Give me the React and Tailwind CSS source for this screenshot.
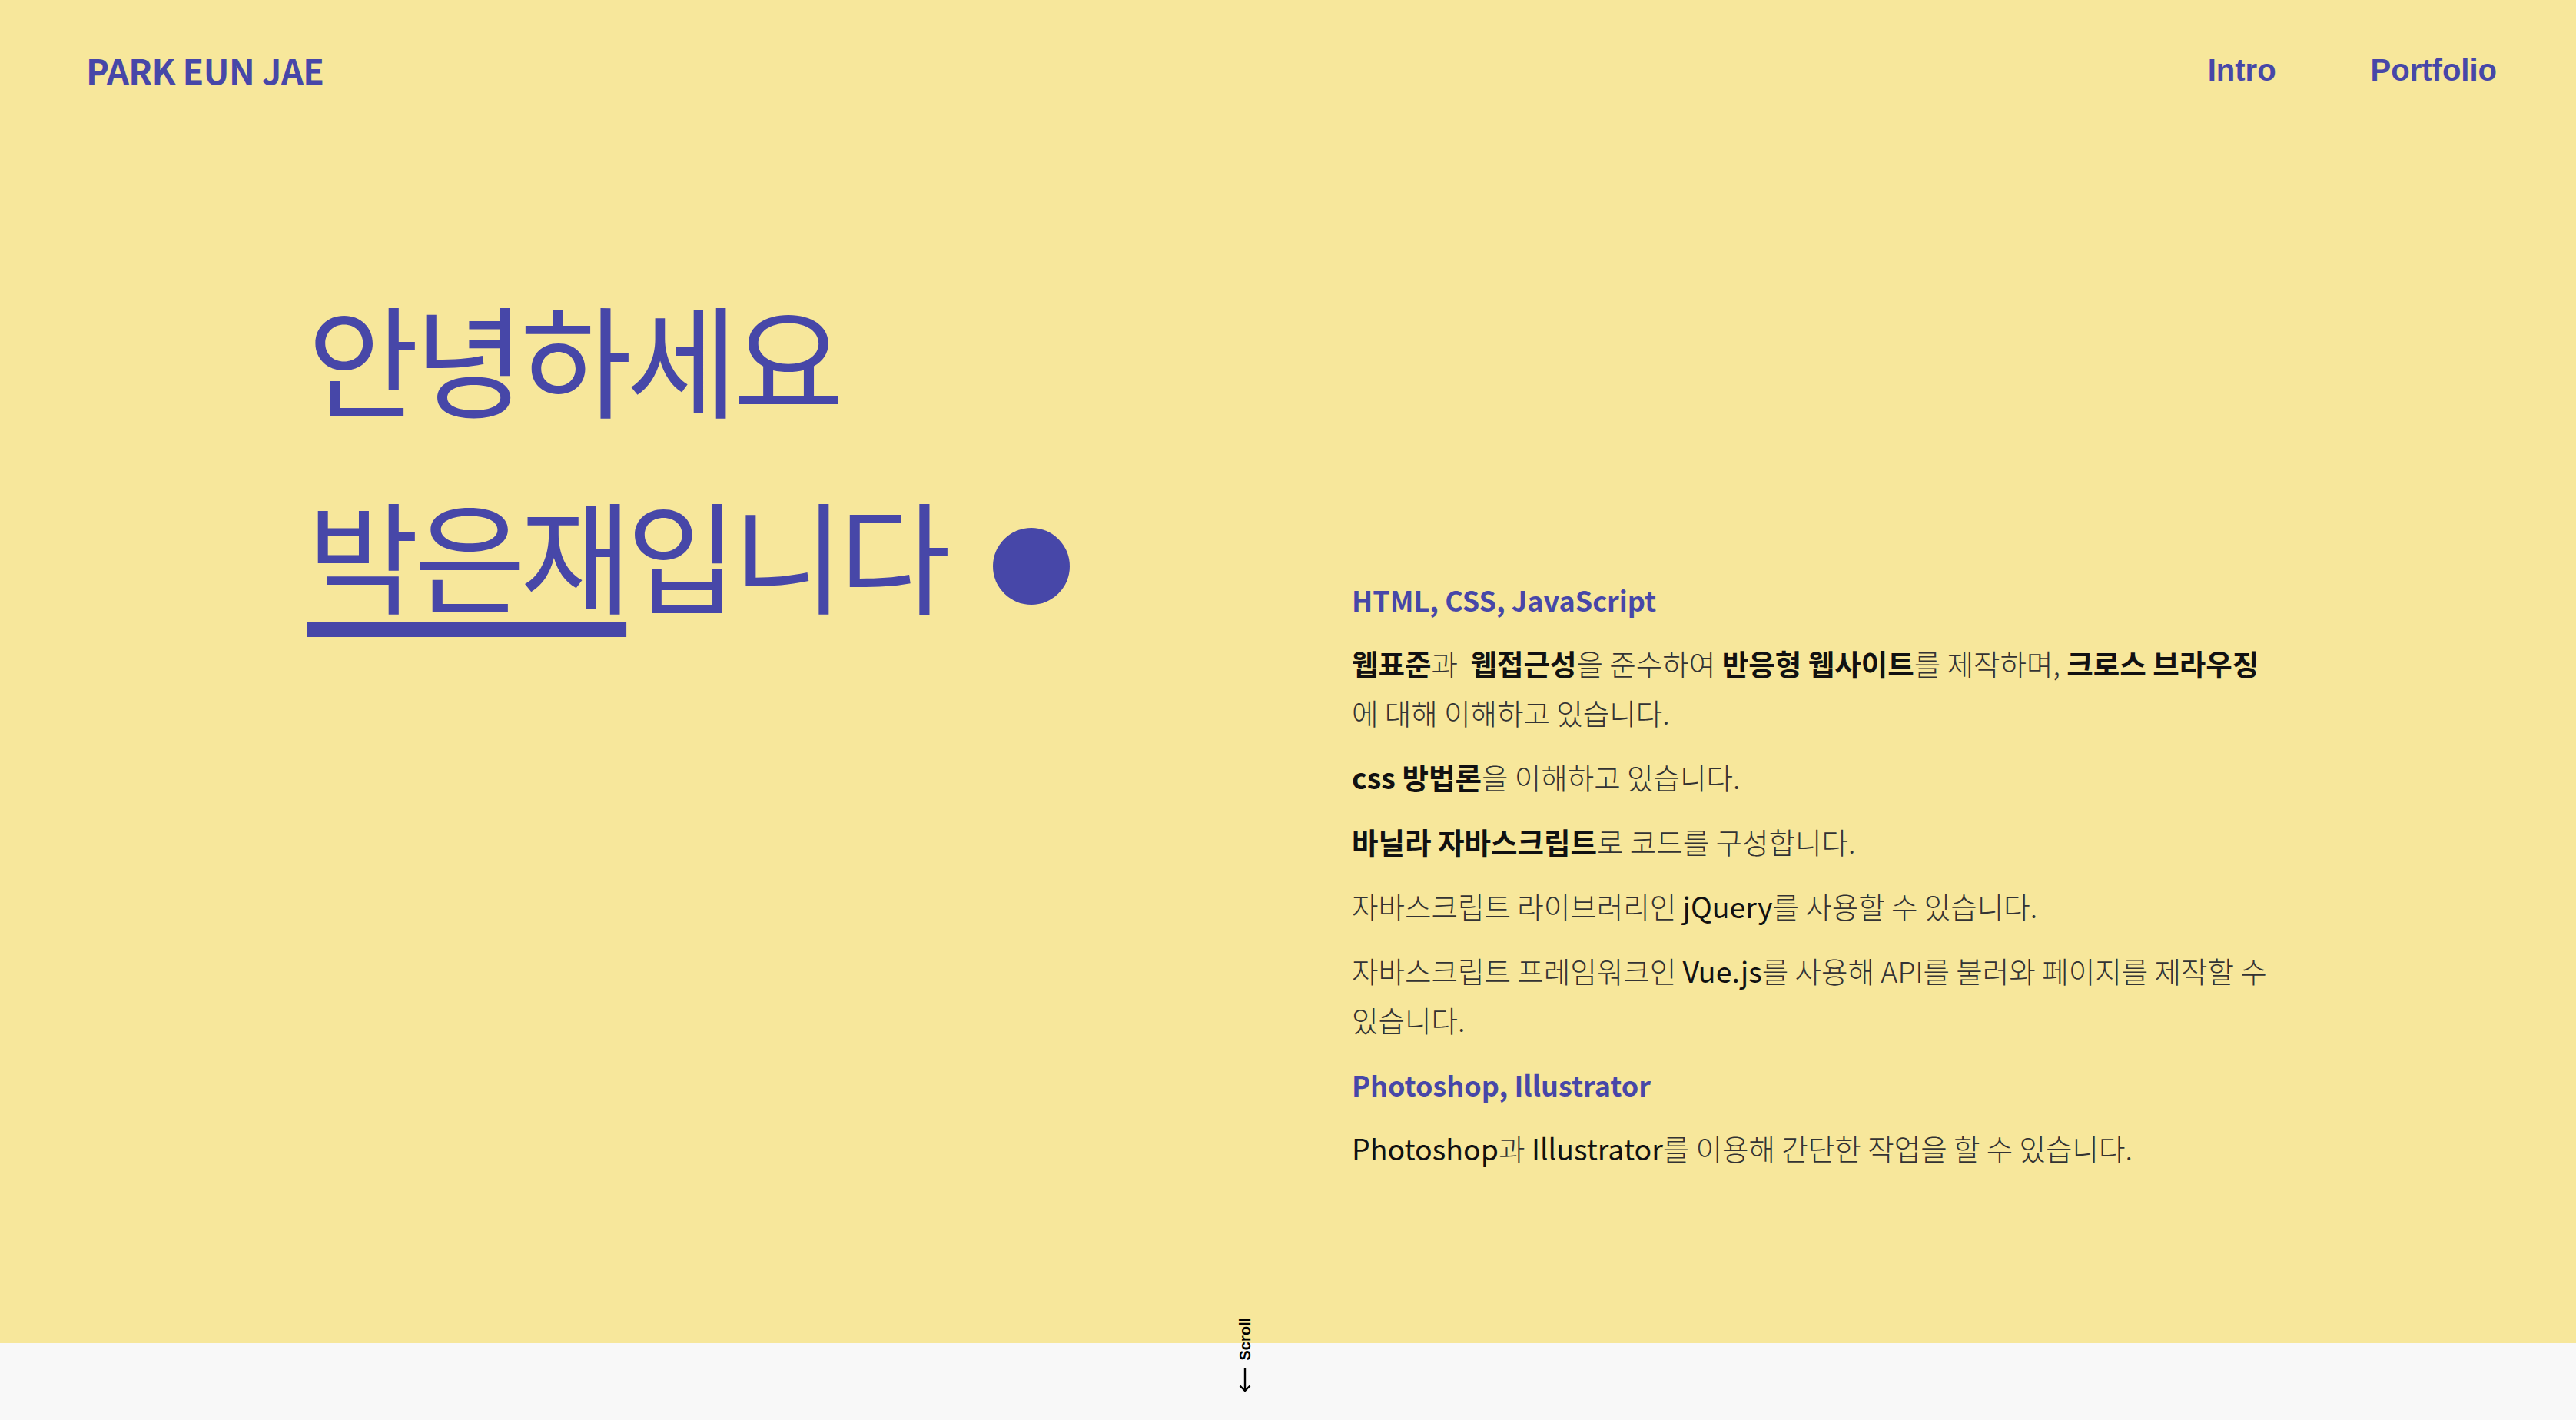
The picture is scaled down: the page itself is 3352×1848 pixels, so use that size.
const kr = { fontFamily: '"Noto Sans CJK KR", "Noto Sans", sans-serif' }
const en = { fontFamily: '"Liberation Sans", Arial, sans-serif' }

// bold keyword (hangul)
function Strong({ children }) {
  return <span className="font-bold text-[#111]">{children}</span>
}

// tool / library names are only darker, not heavier
function Tech({ children }) {
  return <span className="font-normal text-[#111]">{children}</span>
}

function Skill({ title, children, first }) {
  return (
    <div className={first ? '' : 'mt-[3px]'}>
      <h3 className="mb-[19px] text-[36px] font-bold leading-[64px] text-[#4747a8]">{title}</h3>
      {children}
    </div>
  )
}

function Line({ children }) {
  return <p className="mb-[20px] text-[37.5px] font-light leading-[64px] text-[#333]">{children}</p>
}

export default function App() {
  return (
    <div className="min-h-screen bg-[#f8f8f8]" style={kr}>
      <section className="relative h-[1748px] bg-[#f7e79b]">
        {/* header */}
        <header className="flex h-[182px] items-center justify-between pl-[112px] pr-[103px]">
          <h1 className="text-[45px] font-bold tracking-[-0.5px] text-[#4747a8]">PARK EUN JAE</h1>
          <nav className="flex gap-[123px] text-[40px] font-bold text-[#4747a8]" style={en}>
            <a href="#intro">Intro</a>
            <a href="#portfolio">Portfolio</a>
          </nav>
        </header>

        {/* intro */}
        <div className="flex pl-[400px]">
          <div className="w-[1359px] pt-[154px]">
            <h2 className="text-[158px] font-normal leading-[255px] tracking-[-7px] text-[#4747a8]">
              <span className="block">안녕하세요</span>
              <span className="flex items-center">
                <span>
                  <span className="underline decoration-[20px] underline-offset-[22px] [text-decoration-skip-ink:none]">박은재</span>
                  입니다
                </span>
                <span className="ml-[62px] mt-[36px] h-[100px] w-[100px] shrink-0 rounded-full bg-[#4747a8]" />
              </span>
            </h2>
          </div>

          <div className="w-[1200px] pt-[566px]">
            <Skill title="HTML, CSS, JavaScript" first>
              <Line>
                <Strong>웹표준</Strong>과 &nbsp;<Strong>웹접근성</Strong>을 준수하여 <Strong>반응형 웹사이트</Strong>를 제작하며,{' '}
                <Strong>크로스 브라우징</Strong>에 대해 이해하고 있습니다.
              </Line>
              <Line>
                <Strong>css 방법론</Strong>을 이해하고 있습니다.
              </Line>
              <Line>
                <Strong>바닐라 자바스크립트</Strong>로 코드를 구성합니다.
              </Line>
              <Line>
                자바스크립트 라이브러리인 <Tech>jQuery</Tech>를 사용할 수 있습니다.
              </Line>
              <Line>
                자바스크립트 프레임워크인 <Tech>Vue.js</Tech>를 사용해 API를 불러와 페이지를 제작할 수 있습니다.
              </Line>
            </Skill>
            <Skill title="Photoshop, Illustrator">
              <Line>
                <Tech>Photoshop</Tech>과 <Tech>Illustrator</Tech>를 이용해 간단한 작업을 할 수 있습니다.
              </Line>
            </Skill>
          </div>
        </div>

        {/* scroll hint */}
        <div className="absolute left-[1606px] top-[1715px] flex w-[28px] flex-col items-center gap-[9px] text-black">
          <span className="rotate-180 text-[20px] font-bold leading-[20px] [writing-mode:vertical-rl]" style={en}>
            Scroll
          </span>
          <svg width="16" height="32" viewBox="0 0 16 32" fill="none" stroke="currentColor" strokeWidth="2.4">
            <path d="M8 0v30" />
            <path d="M1.5 23.5L8 30l6.5-6.5" />
          </svg>
        </div>
      </section>
      <section className="h-[100px] bg-[#f8f8f8]" />
    </div>
  )
}
